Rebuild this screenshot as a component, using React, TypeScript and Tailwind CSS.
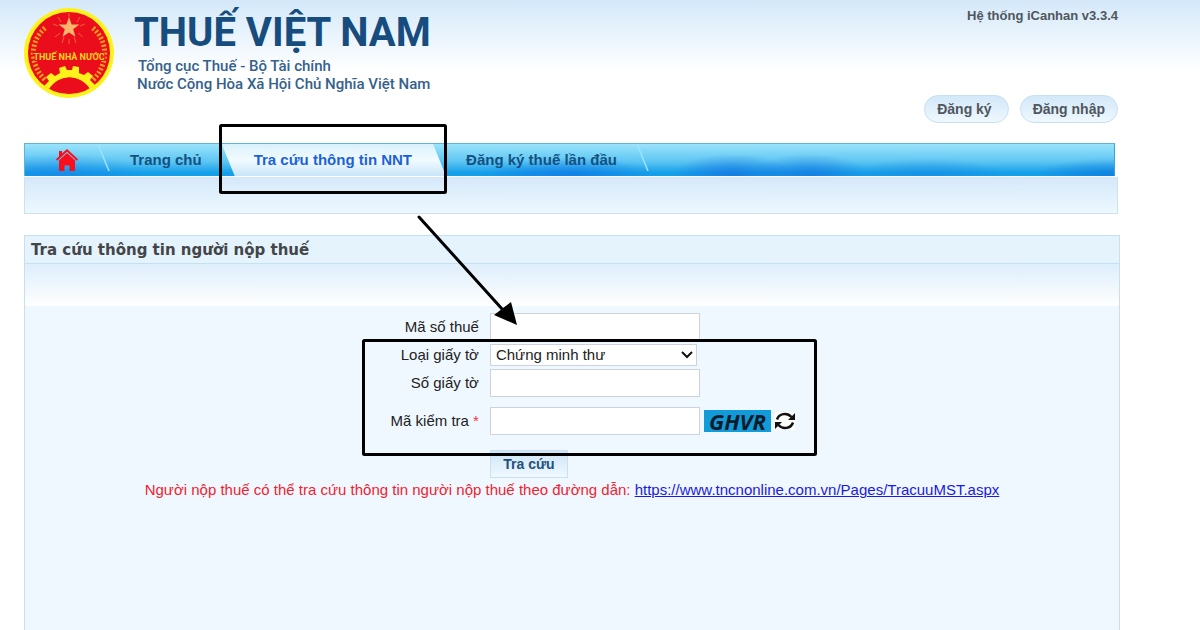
import React, { useState } from 'react'

const Emblem = () => (
  <svg viewBox="0 0 90 90" className="size-[90px] shrink-0" role="img" aria-label="Thuế nhà nước">
    <circle cx="45" cy="45" r="45" fill="#fff21a" />
    <circle cx="45" cy="45" r="41" fill="#ec0d1c" />
    <g stroke="#f5603c" strokeWidth="1">
      <path d="M45 5v4M34 9l3 5M56 9l-3 5M29 16l5 2M61 16l-5 2M31 29l5-4M59 29l-5-4M38 35l2-6M52 35l-2-6M45 36v-5" />
    </g>
    <path d="M45 9l2.600 7.400 7.800.200-6.200 4.700 2.300 7.500-6.500-4.400-6.500 4.400 2.300-7.500-6.200-4.700 7.800-.200z" fill="#ffb56b" />
    <path d="M21 20C5 34 6 57 21 72M69 20c16 14 15 37 0 52" fill="none" stroke="#f3a21f" strokeWidth="5" strokeDasharray="2 2" />
    <path
      d="M20 78l5-5-3-4 5-4 4 3 5-3-1-5 6-2 2 4h5l1-4 6 1 0 6 5 2 4-3 5 4-3 4 5 5-5 4A24 24 0 0 0 25 81z"
      fill="#fff21a"
    />
    <path d="M28 81a19 19 0 0 1 35 0A40 40 0 0 1 28 81z" fill="#ec0d1c" />
    <text x="45" y="52" textAnchor="middle" className="fill-[#ffd51c] stroke-[#ec0d1c] stroke-2 font-[Roboto,sans-serif] text-[9px] font-bold [paint-order:stroke]">
      THUẾ NHÀ NƯỚC
    </text>
  </svg>
)

const HomeIcon = () => (
  <svg viewBox="0 0 22 22" className="h-[22px] w-[22px]" fill="#fb0d1b" aria-hidden="true">
    <path d="M11 0l11 10.300-1.300 1.500L11 2.800l-9.700 9L0 10.300l3-2.900V2h3v2.600z" />
    <path d="M11 4l8 7.500V21a1 1 0 0 1-1 1h-4.500v-5.500h-5V22H4a1 1 0 0 1-1-1v-9.500z" />
  </svg>
)

const RefreshIcon = () => (
  <svg viewBox="0 0 20 18" className="h-[18px] w-5" fill="none" stroke="#111" strokeWidth="2.500" aria-hidden="true">
    <path d="M2 7.500C4 1.500 12 0 16.500 5M18 10.500C16 16.500 8 18 3.500 13" />
    <path d="M20 1v7h-7zM0 17v-7h7z" fill="#111" stroke="none" />
  </svg>
)

const Slash = () => (
  <li aria-hidden="true" className="h-full w-3">
    <svg viewBox="0 0 12 32" className="h-full w-full">
      <path d="M0 0l11 27" stroke="#9be4fb" strokeWidth="1.500" />
    </svg>
  </li>
)

type RowProps = {
  id?: string
  label?: string
  required?: boolean
  className?: string
  children: React.ReactNode
}

const Row = ({ id, label, required, className = '', children }: RowProps) => (
  <div className={`grid grid-cols-[17fr_23fr] items-center ${className}`}>
    {label ? (
      <label htmlFor={id} className="pr-[11px] text-right text-[15px] leading-5 text-[#222]">
        {label}
        {required && <span className="text-[#f5333f]"> *</span>}
      </label>
    ) : (
      <span />
    )}
    <div className="flex items-center">{children}</div>
  </div>
)

const inputStyle = 'h-7 w-[210px] border border-[#ccd3dc] bg-white px-1.5 text-[15px] outline-none'

// marker boxes and the arrow that lie over the page
const Annotations = () => (
  <svg
    width="1200"
    height="630"
    className="pointer-events-none absolute top-0 left-0"
    fill="none"
    stroke="#000"
    strokeWidth="3"
    strokeLinejoin="round"
    strokeLinecap="round"
    aria-hidden="true"
  >
    <rect x="220.500" y="125.500" width="225" height="67" rx="1" />
    <rect x="363.500" y="340.500" width="452" height="114" rx="1" />
    <path d="M419 217l84 93" />
    <path d="M517 325l-23-10 17-13z" fill="#000" stroke="none" />
  </svg>
)

const App = () => {
  const [taxCode, setTaxCode] = useState('')
  const [paperNo, setPaperNo] = useState('')
  const [captcha, setCaptcha] = useState('')

  return (
    <div className="relative flex min-h-screen flex-col overflow-hidden bg-white bg-[linear-gradient(#d4e8f9,#e9f4fc_35px,#fff_72px)] pr-20 pl-6 font-['Liberation_Sans',Arial,sans-serif]">
      <header className="flex h-[143px] justify-between pt-2">
        <div className="flex gap-5">
          <Emblem />
          <div className="pt-px font-[Roboto,sans-serif] text-[#164c7e]">
            <h1 className="text-[40px] leading-[48px] font-bold">THUẾ VIỆT NAM</h1>
            <p className="pl-1 text-[15px] leading-[18px] font-medium text-[#35618c]">Tổng cục Thuế - Bộ Tài chính</p>
            <p className="pl-[3px] text-[15px] leading-[18px] font-medium text-[#35618c]">Nước Cộng Hòa Xã Hội Chủ Nghĩa Việt Nam</p>
          </div>
        </div>
        <div className="flex flex-col items-end justify-between pr-0.5 pb-5 font-bold text-[#50565e]">
          <p className="text-[13px] leading-4">Hệ thống iCanhan v3.3.4</p>
          <div className="flex gap-[11px] text-[14px]">
            <button className="h-7 rounded-full border border-[#c9e0f2] bg-linear-to-b from-[#d3e8f9] to-[#eef8fe] pr-4 pl-3">Đăng ký</button>
            <button className="h-7 rounded-full border border-[#c9e0f2] bg-linear-to-b from-[#d3e8f9] to-[#eef8fe] px-3">Đăng nhập</button>
          </div>
        </div>
      </header>

      <nav className="mr-[5px] h-[33px] border border-b-0 border-t-[#62b4d6] border-r-[#3aa4dd] border-l-[#62b4d6] bg-[radial-gradient(ellipse_60px_22px_at_65%_100%,#1673e0cc,transparent),radial-gradient(ellipse_60px_22px_at_72%_100%,#1673e0bb,transparent),radial-gradient(ellipse_75px_18px_at_83%_100%,#1685e288,transparent),radial-gradient(ellipse_80px_18px_at_100%_100%,#0d78dccc,transparent),radial-gradient(ellipse_90px_18px_at_50%_100%,#0f78e6cc,transparent),radial-gradient(ellipse_90px_22px_at_3%_100%,#1684e8aa,transparent),linear-gradient(#9be4fb,#5cc5f2_55%,#159fe9_90%,#12a0ea)]">
        <ul className="flex h-full items-center text-[15px] font-bold text-[#14507f]">
          <li className="pr-5 pl-[31px]">
            <a href="#" aria-label="Trang chủ" className="block"><HomeIcon /></a>
          </li>
          <Slash />
          <li className="px-5"><a href="#">Trang chủ</a></li>
          <li className="flex h-full items-center bg-linear-to-b from-[#d9f1fb] via-[#f2fbff] to-[#c8e5f8] pr-8.5 pl-8 text-[#1b62d8] [clip-path:polygon(0_0,calc(100%-13px)_0,100%_100%,13px_100%)]">
            <a href="#">Tra cứu thông tin NNT</a>
          </li>
          <li className="px-5"><a href="#">Đăng ký thuế lần đầu</a></li>
          <Slash />
        </ul>
      </nav>
      <div className="mt-px mr-0.5 h-[37px] border border-t-0 border-[#cfe0ee] bg-linear-to-b from-[#d5e8f9] to-[#edf8ff]" />

      <main className="mt-[21px] flex flex-1 flex-col border border-b-0 border-[#c6dff2] bg-[#f0f8ff]">
        <h2 className="h-7 border-b border-[#c6dff2] bg-[#e5f3fc] pl-1.5 font-['DejaVu_Sans',Verdana,sans-serif] text-[15px] leading-7 font-bold text-[#434549]">
          Tra cứu thông tin người nộp thuế
        </h2>
        <div className="h-[42px] bg-linear-to-b from-[#deeefb] to-white" />
        <form className="flex flex-col gap-[3px] pt-[7px]" onSubmit={e => e.preventDefault()}>
          <Row id="taxCode" label="Mã số thuế">
            <input id="taxCode" type="text" className={inputStyle} value={taxCode} onChange={e => setTaxCode(e.target.value)} />
          </Row>
          <Row id="paperType" label="Loại giấy tờ">
            <div className="relative">
              <select id="paperType" className="block h-[22px] w-[207px] appearance-none border border-[#ccd3dc] bg-white pl-[5px] text-[15px] leading-5 text-[#222]">
                <option>Chứng minh thư</option>
              </select>
              <svg viewBox="0 0 12 8" className="pointer-events-none absolute top-[7px] right-1 h-2 w-3" fill="none" stroke="#111" strokeWidth="2" aria-hidden="true">
                <path d="M1 1l5 5 5-5" />
              </svg>
            </div>
          </Row>
          <Row id="paperNo" label="Số giấy tờ">
            <input id="paperNo" type="text" className={inputStyle} value={paperNo} onChange={e => setPaperNo(e.target.value)} />
          </Row>
          <Row id="captcha" label="Mã kiểm tra" required className="mt-[7px]">
            <input id="captcha" type="text" className={inputStyle} value={captcha} onChange={e => setCaptcha(e.target.value)} />
            <span className="ml-1 flex h-[22px] w-[67px] items-center justify-center bg-[#129bd9] font-['Open_Sans',sans-serif] text-[22px] leading-5 font-bold text-[#0a1c2c] italic">
              GHVR
            </span>
            <button type="button" aria-label="Đổi mã" className="ml-1 bg-white"><RefreshIcon /></button>
          </Row>
          <Row className="mt-3">
            <button type="submit" className="h-7 w-[78px] border border-[#c9e0f2] bg-linear-to-b from-[#cfe5f7] to-[#eff9ff] text-[14px] leading-5 font-bold text-[#24507c]">
              Tra cứu
            </button>
          </Row>
        </form>
        <p className="text-center text-[15px] leading-6 text-[#f0222f]">
          Người nộp thuế có thể tra cứu thông tin người nộp thuế theo đường dẫn:{' '}
          <a href="https://www.tncnonline.com.vn/Pages/TracuuMST.aspx" className="text-[#1a1ae0] underline">
            https://www.tncnonline.com.vn/Pages/TracuuMST.aspx
          </a>
        </p>
      </main>

      <Annotations />
    </div>
  )
}

export default App
